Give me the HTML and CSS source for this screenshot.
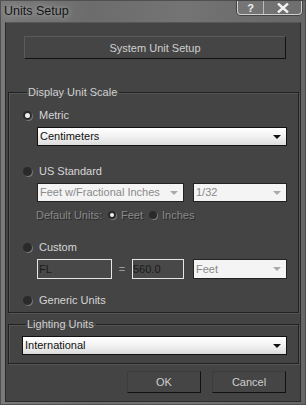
FILE: index.html
```html
<!DOCTYPE html>
<html lang="en">
<head>
  <meta charset="UTF-8">
  <title>Units Setup</title>
  <link rel="stylesheet" href="styles.css">
</head>
<body>
  <div class="window">
    <div class="title-bar">
      <div class="title">Units Setup</div>
      <div class="caption-buttons">
        <div class="cap-btn help">?</div>
        <div class="cap-btn close">
          <svg width="12" height="10" viewBox="0 0 12 10"><path d="M1 0.5 L11 9.5 M11 0.5 L1 9.5" stroke="#f2f2f2" stroke-width="2.4"/></svg>
        </div>
      </div>
    </div>

    <div class="client">
      <div class="btn wide-btn">System Unit Setup</div>

      <fieldset class="group display-group">
        <legend>Display Unit Scale</legend>

        <div class="radio-row metric">
          <span class="radio checked"></span>
          <span class="label">Metric</span>
        </div>
        <div class="select-row">
          <div class="select full">Centimeters<span class="arrow"></span></div>
        </div>

        <div class="radio-row us">
          <span class="radio"></span>
          <span class="label">US Standard</span>
        </div>
        <div class="select-row">
          <div class="select disabled feet-sel">Feet w/Fractional Inches<span class="arrow"></span></div>
          <div class="select disabled frac-sel">1/32<span class="arrow"></span></div>
        </div>
        <div class="default-row">
          <span class="dim">Default Units:</span>
          <span class="radio small checked"></span>
          <span class="dim">Feet</span>
          <span class="radio small"></span>
          <span class="dim">Inches</span>
        </div>

        <div class="radio-row custom">
          <span class="radio"></span>
          <span class="label">Custom</span>
        </div>
        <div class="select-row">
          <div class="field fl">FL</div>
          <span class="equals">=</span>
          <div class="field num">560.0</div>
          <div class="select disabled unit-sel">Feet<span class="arrow"></span></div>
        </div>

        <div class="radio-row generic">
          <span class="radio"></span>
          <span class="label">Generic Units</span>
        </div>
      </fieldset>

      <fieldset class="group light-group">
        <legend>Lighting Units</legend>
        <div class="select full">International<span class="arrow"></span></div>
      </fieldset>

      <div class="actions">
        <div class="btn action-btn">OK</div>
        <div class="btn action-btn">Cancel</div>
      </div>
    </div>
  </div>
</body>
</html>
```

FILE: styles.css
```css
* {
  box-sizing: border-box;
  margin: 0;
  padding: 0;
}

body {
  width: 306px;
  height: 405px;
  overflow: hidden;
  background: #6a6a6a;
  font-family: "Liberation Sans", Arial, sans-serif;
  font-size: 11px;
  color: #d6d6d6;
}

.window {
  height: 405px;
  display: flex;
  flex-direction: column;
  background: linear-gradient(90deg, #7a7a7a 0%, #6c6c6c 30%, #747474 60%, #666 100%);
  border: 1px solid #505050;
}

.title-bar {
  height: 21px;
  display: flex;
  justify-content: space-between;
  align-items: flex-start;
}

.title {
  padding: 3px 0 0 3px;
  font-size: 12.5px;
  color: #151515;
  text-shadow: 0 0 6px rgba(255, 255, 255, 0.6);
}

.caption-buttons {
  display: flex;
  margin-right: 3px;
  border: 1px solid #cfcfcf;
  border-top: none;
  border-radius: 0 0 4px 4px;
  background: rgba(255, 255, 255, 0.06);
  box-shadow: 0 0 0 1px #444;
}

.cap-btn {
  height: 13px;
  display: flex;
  align-items: center;
  justify-content: center;
  color: #eee;
  font-weight: bold;
  font-size: 11px;
}

.help {
  width: 26px;
  border-right: 1px solid #bbb;
}

.close {
  width: 37px;
}

.client {
  flex: 1;
  margin: 0 4px 2px 4px;
  background: #444;
  border: 1px solid #2b2b2b;
  border-top-color: #575757;
  padding: 13px 1px 0 2px;
  display: flex;
  flex-direction: column;
}

.btn {
  display: flex;
  align-items: center;
  justify-content: center;
  color: #cfcfcf;
  background: #454545;
  border: 1px solid #5a5a5a;
  border-right-color: #111;
  border-bottom-color: #111;
}

.wide-btn {
  height: 23px;
  margin: 0 13px 0 16px;
}

.group {
  border: 1px solid #222;
  box-shadow: inset 1px 1px 0 #555, 1px 1px 0 #555;
}

.group legend {
  margin-left: 4px;
  padding: 0 2px 0 1px;
  color: #d0d0d0;
  font-size: 11px;
  line-height: 13px;
}

.display-group {
  margin-top: 27px;
  padding: 9px 0 5px 14px;
}

.light-group {
  margin-top: 5px;
  padding: 5px 11px 8px 13px;
}

.radio-row {
  display: flex;
  align-items: center;
  height: 14px;
  gap: 7px;
}

.radio {
  width: 9px;
  height: 9px;
  border-radius: 50%;
  background: #2a2a2a;
  box-shadow: 1px 1px 0 #777;
  position: relative;
  flex: none;
}

.radio.checked::after {
  content: "";
  position: absolute;
  left: 2px;
  top: 2px;
  width: 5px;
  height: 5px;
  border-radius: 50%;
  background: #f0f0f0;
}

.radio.small {
  width: 8px;
  height: 8px;
  margin: 0 5px 0 6px;
}

.radio.small.checked::after {
  left: 2px;
  top: 2px;
  width: 4px;
  height: 4px;
}

.select-row {
  display: flex;
  align-items: center;
  margin: 5px 11px 0 14px;
}

.select {
  position: relative;
  height: 19px;
  line-height: 17px;
  padding-left: 2px;
  border: 1px solid #111;
  background: linear-gradient(#ffffff, #f2f2f2 50%, #dcdcdc);
  color: #111;
}

.select .arrow {
  position: absolute;
  right: 5px;
  top: 7px;
  border-left: 4px solid transparent;
  border-right: 4px solid transparent;
  border-top: 4px solid #111;
}

.select.full {
  flex: 1;
}

.select.disabled {
  background: #f4f4f4;
  color: #8a8a8a;
  border-color: #222;
}

.select.disabled .arrow {
  border-top-color: #aaa;
}

.feet-sel {
  width: 147px;
}

.frac-sel {
  margin-left: 9px;
  flex: 1;
}

.unit-sel {
  margin-left: 9px;
  flex: 1;
  height: 20px;
  line-height: 18px;
}

.default-row {
  display: flex;
  align-items: center;
  height: 14px;
  margin: 6px 0 0 13px;
}

.dim {
  color: #8a8a8a;
  text-shadow: 1px 1px 0 #2a2a2a;
}

.us {
  margin-top: 18px;
}

.custom {
  margin-top: 18px;
}

.generic {
  margin-top: 14px;
}

.field {
  height: 20px;
  line-height: 18px;
  border: 1px solid #e6e6e6;
  background: #484848;
  color: #1a1a1a;
}

.fl {
  width: 75px;
  padding-left: 1px;
}

.equals {
  width: 20px;
  text-align: center;
  color: #9a9a9a;
}

.num {
  width: 52px;
}

.actions {
  display: flex;
  justify-content: flex-end;
  gap: 11px;
  margin: 7px 13px 0 0;
}

.action-btn {
  width: 74px;
  height: 22px;
  border-color: #3c3c3c #111 #111 #3c3c3c;
}
```
